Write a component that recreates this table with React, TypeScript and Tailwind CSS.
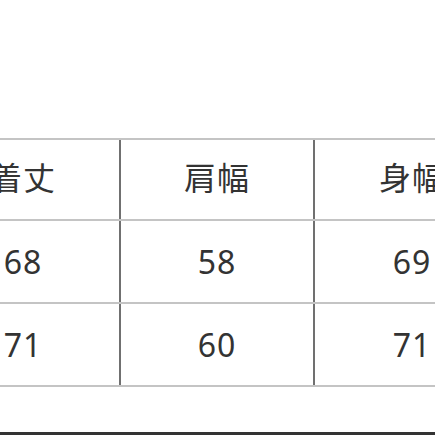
const HEAD = ["着丈", "肩幅", "身幅"];
const ROWS = [
  ["68", "58", "69"],
  ["71", "60", "71"],
];

function Cell({ children, last }: { children: React.ReactNode; last?: boolean }) {
  return (
    <div
      className={
        "w-[194px] shrink-0 flex items-center justify-center " +
        (last ? "" : "border-r-2 border-[#707070]")
      }
    >
      {children}
    </div>
  );
}

export default function App() {
  return (
    <div
      className="w-[435px] h-[435px] overflow-hidden bg-white flex flex-col text-[#333] leading-none"
      style={{ fontFamily: '"Noto Sans CJK JP", "Noto Sans", sans-serif' }}
    >
      <div className="mt-[138px] ml-[-73px] w-[600px] flex flex-col">
        <div className="flex h-[81px] border-t-2 border-[#c4c4c4]">
          {HEAD.map((h, i) => (
            <Cell key={h} last={i === 2}>
              <span className="text-[32px] tracking-[1px] mb-[8px]">{h}</span>
            </Cell>
          ))}
        </div>
        {ROWS.map((r, ri) => (
          <div key={ri} className="flex h-[83px] border-t-2 border-[#c4c4c4]">
            {r.map((v, i) => (
              <Cell key={i} last={i === 2}>
                <span className="text-[32px] tracking-[1px] font-['Noto_Sans',sans-serif]">
                  {v}
                </span>
              </Cell>
            ))}
          </div>
        ))}
        <div className="h-[2px] bg-[#c4c4c4]" />
      </div>
      <div className="mt-auto h-[3px] bg-[#333]" />
    </div>
  );
}
